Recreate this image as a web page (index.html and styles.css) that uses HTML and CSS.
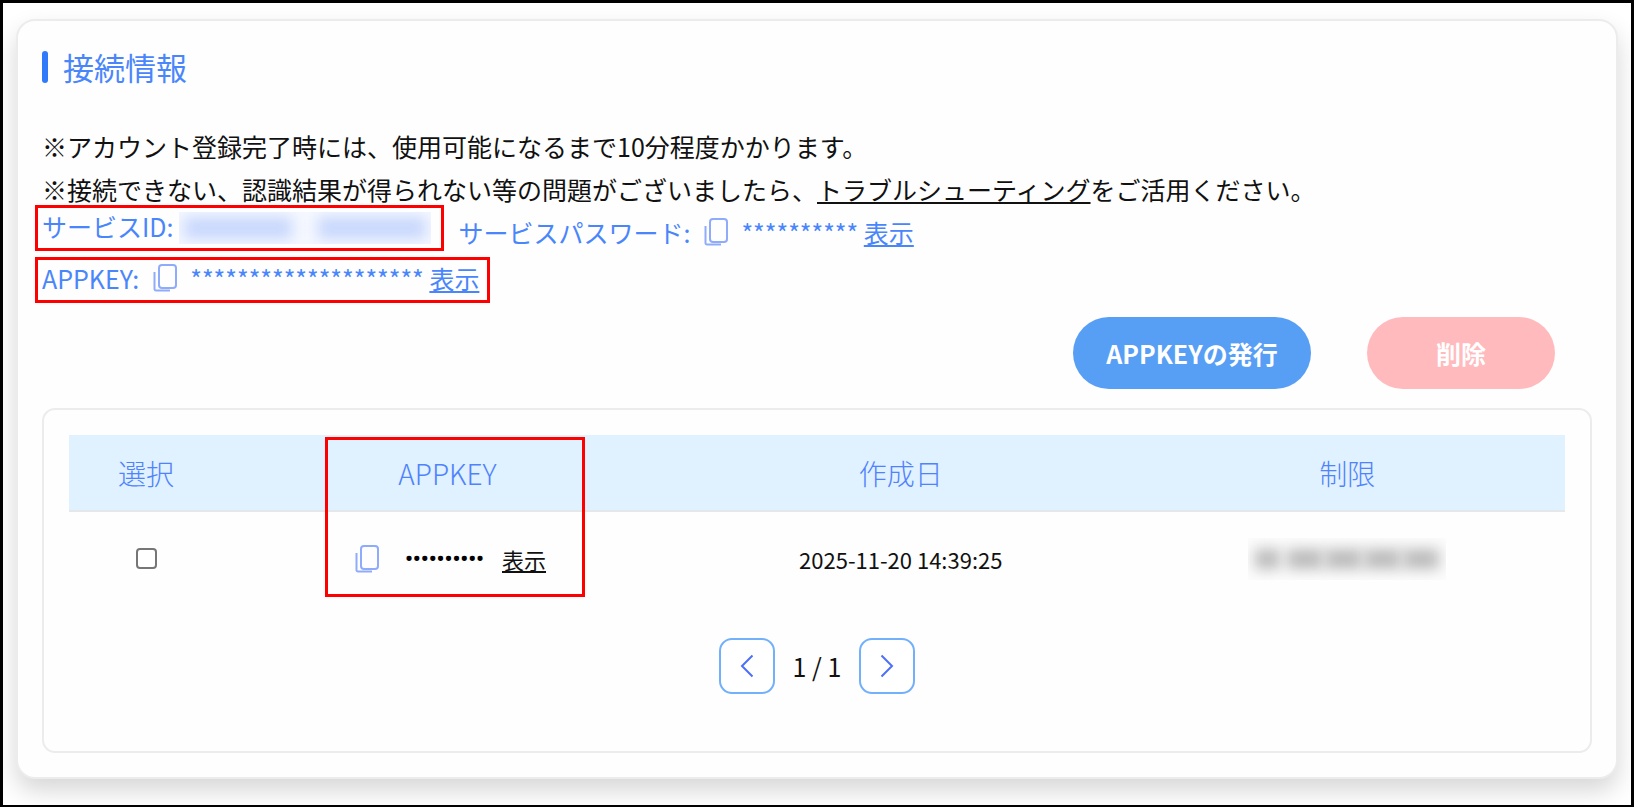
FILE: index.html
```html
<!DOCTYPE html>
<html lang="ja">
<head>
<meta charset="utf-8">
<title>接続情報</title>
<link rel="stylesheet" href="styles.css">
</head>
<body>
<svg width="0" height="0" class="sprite" aria-hidden="true">
  <symbol id="copy" viewBox="0 0 24 28">
    <rect x="6" y="1" width="17" height="23" rx="3"/>
    <path d="M1.500 8V25a1.500 1.500 0 0 0 1.500 1.500H17"/>
  </symbol>
</svg>
<main class="card">
  <h1 class="title">接続情報</h1>
  <p class="note">※アカウント登録完了時には、使用可能になるまで10分程度かかります。</p>
  <p class="note">※接続できない、認識結果が得られない等の問題がございましたら、<a href="#">トラブルシューティング</a>をご活用ください。</p>
  <div class="credentials">
    <div class="credential-row">
      <div class="field marked">
        <span>サービスID:</span>
        <span class="redacted redacted-id"><i></i><i></i></span>
      </div>
      <div class="field field-end">
        <span>サービスパスワード:</span>
        <button class="icon-button" aria-label="コピー"><svg class="copy"><use href="#copy"/></svg></button>
        <span>********** <a href="#">表示</a></span>
      </div>
    </div>
    <div class="field marked">
      <span>APPKEY:</span>
      <button class="icon-button" aria-label="コピー"><svg class="copy"><use href="#copy"/></svg></button>
      <span>******************** <a href="#">表示</a></span>
    </div>
  </div>
  <div class="actions">
    <button class="action issue">APPKEYの発行</button>
    <button class="action delete" disabled>削除</button>
  </div>
  <section class="panel">
    <div class="table-area">
      <table class="keys">
        <colgroup><col class="col-select"><col class="col-key"><col class="col-date"><col class="col-limit"></colgroup>
        <thead>
          <tr><th>選択</th><th>APPKEY</th><th>作成日</th><th>制限</th></tr>
        </thead>
        <tbody>
          <tr>
            <td><input type="checkbox" class="check" aria-label="選択"></td>
            <td>
              <div class="key-cell">
                <button class="icon-button" aria-label="コピー"><svg class="copy"><use href="#copy"/></svg></button>
                <span class="dots">••••••••••</span>
                <a href="#">表示</a>
              </div>
            </td>
            <td>2025-11-20 14:39:25</td>
            <td><span class="redacted redacted-limit"><i class="short"></i><i></i><i></i><i></i><i></i></span></td>
          </tr>
        </tbody>
      </table>
      <div class="highlight"></div>
    </div>
    <nav class="pager">
      <button class="page-button" aria-label="前へ"><svg viewBox="0 0 14 24"><path d="M12.500 1.500 2 12l10.500 10.500"/></svg></button>
      <span>1 / 1</span>
      <button class="page-button" aria-label="次へ"><svg viewBox="0 0 14 24"><path d="M1.500 1.500 12 12 1.500 22.500"/></svg></button>
    </nav>
  </section>
</main>
</body>
</html>
```

FILE: styles.css
```css
* { box-sizing: border-box; }
html { height: 100%; }
body {
  margin: 0;
  min-height: 100%;
  border: 3px solid #000;
  padding: 16px 13px 26px;
  background: #fff;
  color: #111;
  font-family: "Noto Sans CJK JP", sans-serif;
  font-size: 25px;
  overflow: hidden;
}
a { color: inherit; text-decoration: underline; text-decoration-thickness: 2px; text-underline-offset: 2px; }
button { font: inherit; cursor: pointer; }
.sprite { position: absolute; }

.card {
  border: 2px solid #ececec;
  border-radius: 19px;
  padding: 30px 24px 24px;
  background: #fefefe;
  box-shadow: 0 12px 24px rgba(0, 0, 0, 0.16);
}
.title {
  display: flex;
  align-items: center;
  gap: 15px;
  margin: 0 0 42px;
  font-size: 31px;
  font-weight: 400;
  line-height: 32px;
  color: #4a86fb;
}
.title::before {
  content: "";
  width: 6px;
  height: 32px;
  border-radius: 3px;
  background: #2f7bfa;
}
.note { margin: 0; line-height: 43px; }

.credentials {
  display: flex;
  flex-direction: column;
  align-items: flex-start;
  gap: 16px;
  margin-top: 1px;
  color: #4a86fb;
  line-height: 32px;
}
.credential-row { display: flex; gap: 21px; height: 36px; }
.field { display: flex; height: 32px; padding-right: 4px; }
.field-end { align-self: flex-end; }
.marked { line-height: 28px; outline: 3px solid #f00; outline-offset: 4px; }
.icon-button {
  display: flex;
  align-items: center;
  align-self: center;
  height: 28px;
  margin: 0 13px 0 14px;
  padding: 0;
  border: 0;
  background: none;
}
.marked .icon-button { align-self: flex-start; }
.copy { width: 24px; height: 28px; fill: none; stroke: #8fabfb; stroke-width: 2; }

.redacted { display: flex; align-items: center; overflow: hidden; }
.redacted i { display: block; filter: blur(7px); }
.redacted-id { width: 252px; height: 32px; margin: 0 2px 0 6px; gap: 26px; padding: 0 5px; background: #f5f8ff; }
.redacted-id i { flex: 1; height: 22px; background: #c8d7fc; }
.redacted-limit { width: 198px; height: 42px; margin: 0 auto; gap: 2px; padding: 0 7px; background: #fcfcfc; }
.redacted-limit i { flex: 3; height: 20px; background: #bababa; }
.redacted-limit .short { flex: 2; margin-right: 5px; }

.actions { display: flex; justify-content: flex-end; gap: 56px; margin-top: 21px; padding-right: 37px; }
.action { height: 72px; border: 0; border-radius: 36px; color: #fff; font-weight: 700; }
.issue { width: 238px; padding: 0; background: #579ef5; }
.delete { width: 188px; background: #ffbabd; }

.panel {
  margin-top: 19px;
  border: 2px solid #ececec;
  border-radius: 13px;
  padding: 25px 25px 57px;
}
.table-area { position: relative; }
.keys { width: 100%; table-layout: fixed; border-collapse: collapse; text-align: center; font-size: 22px; }
.col-select { width: 10.3%; }
.col-key { width: 30%; }
.col-date { width: 30.6%; }
.col-limit { width: 29.1%; }
.keys th {
  height: 76px;
  padding: 0;
  border-bottom: 2px solid #e4e8ea;
  background: #e0f1ff;
  color: #4f82fc;
  font-size: 28px;
  font-weight: 300;
}
.keys td { height: 98px; padding: 0 0 4px; }
.check {
  appearance: none;
  display: block;
  width: 21px;
  height: 21px;
  margin: 0 auto;
  border: 2px solid #767676;
  border-radius: 4px;
  background: #fff;
}
.key-cell { display: flex; align-items: center; justify-content: center; padding-left: 6px; }
.key-cell .icon-button { margin: 0 26px 0 0; }
.dots { margin-right: 18px; font-family: Roboto, sans-serif; font-weight: 700; color: #000; }
.highlight {
  position: absolute;
  top: 2px;
  left: 256px;
  width: 260px;
  height: 160px;
  border: 3px solid #f00;
  pointer-events: none;
}

.pager { display: flex; justify-content: center; align-items: center; gap: 18px; margin-top: 29px; }
.page-button {
  display: flex;
  align-items: center;
  justify-content: center;
  width: 56px;
  height: 56px;
  padding: 0;
  border: 2px solid #73b0fb;
  border-radius: 13px;
  background: #fff;
}
.page-button svg { width: 14px; height: 24px; fill: none; stroke: #4d6ff8; stroke-width: 2; }
```
